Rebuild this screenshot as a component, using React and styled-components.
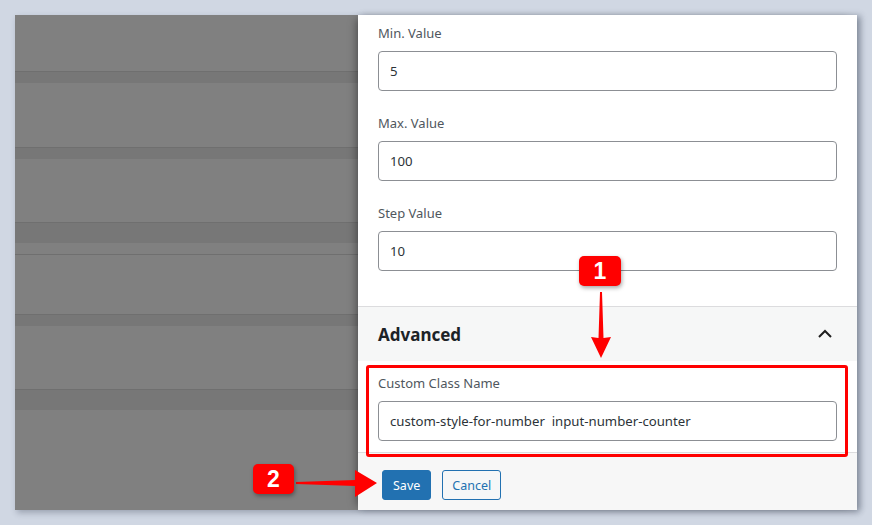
import React from "react";
import styled, { createGlobalStyle } from "styled-components";

const GlobalStyle = createGlobalStyle`
  html, body {
    margin: 0;
    padding: 0;
    background: #d0d7e3;
  }
  * {
    box-sizing: border-box;
  }
`;

const Page = styled.div`
  width: 872px;
  height: 525px;
  padding: 15px;
  font-family: "Noto Sans", "Open Sans", sans-serif;
`;

const Window = styled.div`
  position: relative;
  display: flex;
  width: 842px;
  height: 495px;
  box-shadow: 2px 3px 6px rgba(40, 50, 70, 0.3);
`;

const Backdrop = styled.div`
  width: 343px;
  display: flex;
  flex-direction: column;
  background: #808080;
`;

const Stripe = styled.div`
  height: ${(p) => p.$h}px;
  flex-shrink: 0;
  background: ${(p) => (p.$band ? "#777777" : "#808080")};
  border-top: ${(p) => (p.$band ? "1px solid #6f6f6f" : "none")};
  border-bottom: ${(p) => (p.$line ? "1px solid #6f6f6f" : "none")};
`;

const Panel = styled.div`
  position: relative;
  width: 499px;
  display: flex;
  flex-direction: column;
  background: #fff;
  box-shadow: -6px 0 8px -4px rgba(0, 0, 0, 0.35), 4px 0 6px rgba(40, 50, 70, 0.25);

  > * {
    flex-shrink: 0;
  }
`;

const Fields = styled.div`
  padding: 9px 20px 35px;
  display: flex;
  flex-direction: column;
  gap: 23px;
`;

const Field = styled.div`
  display: flex;
  flex-direction: column;
  gap: 9px;
`;

const Label = styled.label`
  font-size: 13px;
  line-height: 18px;
  color: #50575e;
`;

const Input = styled.div`
  height: 40px;
  border: 1px solid #8c8f94;
  border-radius: 4px;
  padding: 0 11px;
  display: flex;
  align-items: center;
  font-size: 13.2px;
  color: #2c3338;
`;

const SectionHeader = styled.div`
  height: 55px;
  border-top: 1px solid #dcdcde;
  background: #f6f7f7;
  display: flex;
  align-items: center;
  justify-content: space-between;
  padding: 0 20px;

  > h3 {
    margin: 0;
    font-size: 17px;
    font-weight: 700;
    color: #1d2327;
  }
`;

const SectionBody = styled.div`
  padding: 13px 20px 11px;
  border-bottom: 1px solid #dcdcde;
  display: flex;
  flex-direction: column;
  gap: 9px;
`;

const Footer = styled.div`
  flex: 1 1 auto;
  background: #f7f7f7;
  display: flex;
  gap: 11px;
  padding: 17px 24px 0;
  align-items: flex-start;
`;

const Button = styled.button`
  height: 30px;
  padding: 0 ${(p) => (p.$primary ? 10 : 9)}px;
  border-radius: 3px;
  font-family: inherit;
  font-size: 12.5px;
  border: 1px solid #2271b1;
  background: ${(p) => (p.$primary ? "#2271b1" : "#f6f7f7")};
  color: ${(p) => (p.$primary ? "#fff" : "#2271b1")};
`;

const Highlight = styled.div`
  position: absolute;
  left: 351px;
  top: 350px;
  width: 482px;
  height: 92px;
  border: 3px solid #ff0000;
  border-radius: 3px;
  pointer-events: none;
`;

const Badge = styled.div`
  position: absolute;
  left: ${(p) => p.$x}px;
  top: ${(p) => p.$y}px;
  width: ${(p) => p.$w}px;
  height: 30px;
  border-radius: 5px;
  background: #ff0000;
  color: #fff;
  font-family: "Liberation Sans", Arial, sans-serif;
  font-weight: 700;
  font-size: 23px;
  display: flex;
  align-items: center;
  justify-content: center;
  box-shadow: 1px 2px 4px rgba(0, 0, 0, 0.35);
`;

const Overlay = styled.svg`
  position: absolute;
  left: 0;
  top: 0;
  pointer-events: none;
  overflow: visible;
`;

const Chevron = () => (
  <svg width="24" height="24" viewBox="0 0 24 24" fill="none">
    <path d="M6 15l6-6 6 6" stroke="#1e1e1e" strokeWidth="2" />
  </svg>
);

const fields = [
  { label: "Min. Value", value: "5" },
  { label: "Max. Value", value: "100" },
  { label: "Step Value", value: "10" },
];

const stripes = [
  { h: 56 },
  { h: 12, band: true },
  { h: 64 },
  { h: 12, band: true },
  { h: 63 },
  { h: 21, band: true },
  { h: 12, line: true },
  { h: 59 },
  { h: 12, band: true },
  { h: 63 },
  { h: 21, band: true },
  { h: 100 },
];

export default function App() {
  return (
    <>
      <GlobalStyle />
      <Page>
        <Window>
          <Backdrop>
            {stripes.map((s, i) => (
              <Stripe key={i} $h={s.h} $band={s.band} $line={s.line} />
            ))}
          </Backdrop>
          <Panel>
            <Fields>
              {fields.map((f) => (
                <Field key={f.label}>
                  <Label>{f.label}</Label>
                  <Input>{f.value}</Input>
                </Field>
              ))}
            </Fields>
            <SectionHeader>
              <h3>Advanced</h3>
              <Chevron />
            </SectionHeader>
            <SectionBody>
              <Label>Custom Class Name</Label>
              <Input>custom-style-for-number&nbsp; input-number-counter</Input>
            </SectionBody>
            <Footer>
              <Button $primary>Save</Button>
              <Button>Cancel</Button>
            </Footer>
          </Panel>

          <Highlight />
          <Overlay width="842" height="495">
            <polygon points="585,277 587,277 588.5,323 596,322 586,343 576,322 583.5,323" fill="#ff0000" />
            <polygon points="281,467 340,465 340,455 362,468 340,482 340,471 281,469" fill="#ff0000" />
          </Overlay>
          <Badge $x={564} $y={241} $w={42}>1</Badge>
          <Badge $x={238} $y={449} $w={41}>2</Badge>
        </Window>
      </Page>
    </>
  );
}
